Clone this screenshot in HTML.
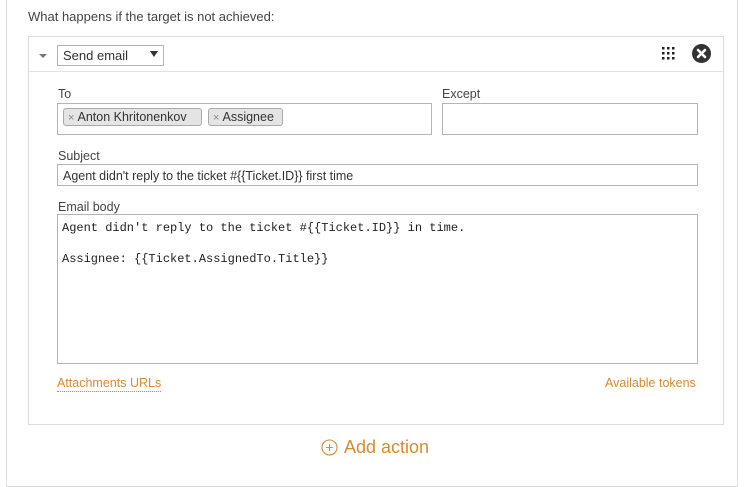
<!DOCTYPE html>
<html><head><style>
body{margin:0;width:747px;height:487px;background:#fff;font-family:"Liberation Sans",sans-serif;position:relative;overflow:hidden;color:#333}
.a{position:absolute}
.outer{left:6px;top:-2px;width:732px;height:489px;border:1px solid #dcdcdc;box-sizing:border-box}
.box{left:28px;top:36px;width:696px;height:389px;border:1px solid #dcdcdc;box-sizing:border-box}
.in{border:1px solid #b4b4b4;box-sizing:border-box;background:#fff}
.lbl{font-size:12.5px;color:#444}
.tag{top:108px;height:18px;border:1px solid #aaa;border-radius:3px;background:#e4e4e4;font-size:12.5px;line-height:16px;box-sizing:border-box;padding:0 4px;color:#333}
.tag b{font-weight:normal;color:#888;font-size:11px}
.mono{font-family:"Liberation Mono",monospace;font-size:12px;color:#222}
.lnk{color:#d88a30;font-size:12.5px}
</style></head><body>
<div class="a outer"></div>
<div class="a lbl" style="left:28px;top:9px;font-size:13px">What happens if the target is not achieved:</div>
<div class="a box"></div>
<div class="a" style="left:29px;top:71px;width:694px;height:1px;background:#e2e2e2"></div>
<div class="a" style="left:39px;top:54px;width:0;height:0;border-left:4px solid transparent;border-right:4px solid transparent;border-top:4px solid #777"></div>
<div class="a in" style="left:57px;top:45px;width:107px;height:21px"></div>
<div class="a" style="left:63px;top:48px;font-size:13px;color:#333">Send email</div>
<div class="a" style="left:150px;top:51px;width:0;height:0;border-left:4px solid transparent;border-right:4px solid transparent;border-top:6px solid #333"></div>
<svg class="a" style="left:662px;top:47px" width="14" height="14"><g fill="#222"><rect x="0" y="0" width="2.5" height="2.5"/><rect x="5" y="0" width="2.5" height="2.5"/><rect x="10" y="0" width="2.5" height="2.5"/><rect x="0" y="5" width="2.5" height="2.5"/><rect x="5" y="5" width="2.5" height="2.5"/><rect x="10" y="5" width="2.5" height="2.5"/><rect x="0" y="10" width="2.5" height="2.5"/><rect x="5" y="10" width="2.5" height="2.5"/><rect x="10" y="10" width="2.5" height="2.5"/></g></svg>
<svg class="a" style="left:692px;top:44px" width="19" height="19"><circle cx="9.5" cy="9.5" r="9.5" fill="#333"/><path d="M6 6L13 13M13 6L6 13" stroke="#fff" stroke-width="2.6" stroke-linecap="round"/></svg>
<div class="a lbl" style="left:58px;top:87px">To</div>
<div class="a in" style="left:57px;top:103px;width:375px;height:32px"></div>
<div class="a tag" style="left:63px;width:139px"><b>× </b>Anton Khritonenkov</div>
<div class="a tag" style="left:208px;width:75px"><b>× </b>Assignee</div>
<div class="a lbl" style="left:442px;top:87px">Except</div>
<div class="a in" style="left:442px;top:103px;width:256px;height:32px"></div>
<div class="a lbl" style="left:58px;top:149px">Subject</div>
<div class="a in" style="left:57px;top:164px;width:641px;height:22px"></div>
<div class="a" style="left:63px;top:169px;font-size:12.5px;color:#333">Agent didn't reply to the ticket #{{Ticket.ID}} first time</div>
<div class="a lbl" style="left:58px;top:200px">Email body</div>
<div class="a in" style="left:57px;top:214px;width:641px;height:150px"></div>
<div class="a mono" style="left:62px;top:221px">Agent didn't reply to the ticket #{{Ticket.ID}} in time.</div>
<div class="a mono" style="left:62px;top:252px">Assignee: {{Ticket.AssignedTo.Title}}</div>
<div class="a lnk" style="left:57px;top:376px;border-bottom:1px dotted #d88a30;line-height:15px">Attachments URLs</div>
<div class="a lnk" style="left:605px;top:376px">Available tokens</div>
<svg class="a" style="left:321px;top:439px" width="17" height="17"><circle cx="8.5" cy="8.5" r="7.5" fill="none" stroke="#d88a30" stroke-width="1.1"/><path d="M8.5 5V12M5 8.5H12" stroke="#d88a30" stroke-width="1.1"/></svg>
<div class="a" style="left:344px;top:437px;font-size:18px;color:#d88a30">Add action</div>
</body></html>
